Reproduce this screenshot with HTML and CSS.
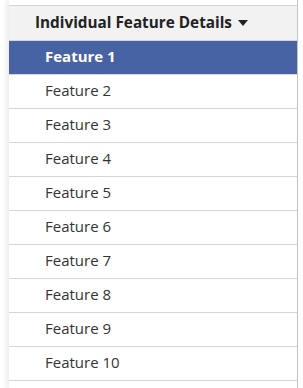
FILE: index.html
```html
<!DOCTYPE html>
<html lang="en">
<head>
    <meta charset="UTF-8">
    <meta name="viewport" content="width=device-width, initial-scale=1.0">
    <title>Individual Feature Details</title>
    <link rel="stylesheet" href="styles.css">
</head>
<body>
    <div class="sidebar">
        <div class="panel">
            <div class="spacer"></div>
            <div class="panel-header">
                Individual Feature Details
                <span class="caret"></span>
            </div>
            <ul class="feature-list">
                <li class="active">Feature 1</li>
                <li>Feature 2</li>
                <li>Feature 3</li>
                <li>Feature 4</li>
                <li>Feature 5</li>
                <li>Feature 6</li>
                <li>Feature 7</li>
                <li>Feature 8</li>
                <li>Feature 9</li>
                <li>Feature 10</li>
                <li></li>
            </ul>
        </div>
    </div>
</body>
</html>
```
FILE: styles.css
```css
/* General */
* {
    margin: 0;
    padding: 0;
    box-sizing: border-box;
}

body {
    font-family: 'Open Sans', sans-serif;
    background-color: #fff;
    color: #333;
    overflow: hidden;
}

/* Panel */
.sidebar {
    padding-left: 9px;
    height: 388px;
    overflow: hidden;
}

.panel {
    width: 289px;
    height: 100%;
    border-right: 1px solid #c4c4c4;
    box-shadow: -3px 0 5px rgba(0, 0, 0, 0.08);
    background-color: #fff;
}

.spacer {
    height: 6px;
    border-bottom: 1px solid #d6d6d6;
}

.panel-header {
    display: flex;
    align-items: center;
    height: 35px;
    padding-left: 26px;
    padding-bottom: 2px;
    background-color: #f2f2f2;
    border-bottom: 1px solid #d6d6d6;
    font-size: 15.3px;
    font-weight: bold;
    color: #222;
}

.caret {
    margin-left: 6px;
    margin-top: 2px;
    border-left: 5px solid transparent;
    border-right: 5px solid transparent;
    border-top: 6px solid #222;
}

/* Features */
.feature-list {
    list-style: none;
}

.feature-list li {
    height: 34px;
    line-height: 31px;
    padding-left: 36px;
    border-bottom: 1px solid #d6d6d6;
    font-size: 15px;
    color: #333;
}

.feature-list li.active {
    background-color: #4863a3;
    color: #fff;
    font-weight: bold;
}
```
